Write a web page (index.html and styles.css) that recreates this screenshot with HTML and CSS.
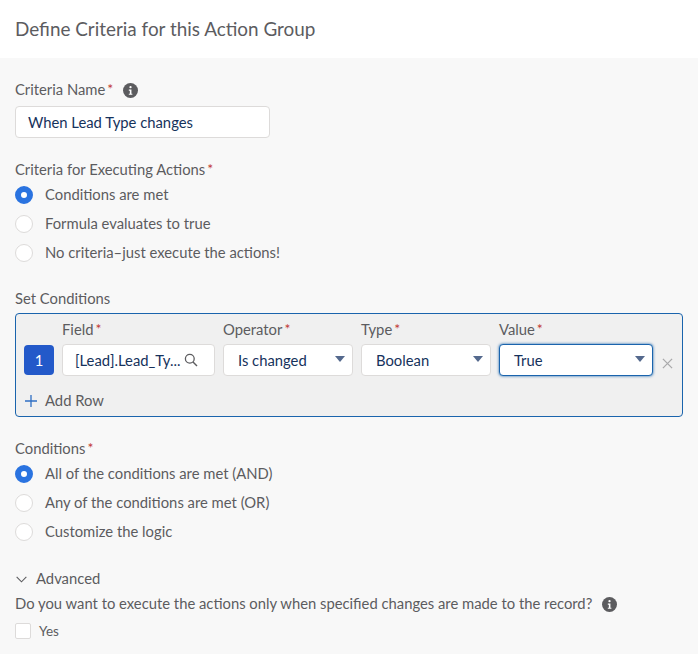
FILE: index.html
```html
<!DOCTYPE html>
<html>
<head>
    <title>Define Criteria for this Action Group</title>
    <link rel="stylesheet" href="styles.css">
</head>
<body>
    <div class="header">Define Criteria for this Action Group</div>

    <div class="content">
        <!-- Criteria name -->
        <div class="label name-label">Criteria Name<span class="req">*</span>
            <svg class="info" viewBox="0 0 16 16"><circle cx="8" cy="8" r="8" fill="#5c5c5f"/><circle cx="8" cy="4.4" r="1.2" fill="#fff"/><path d="M6.2 7h2.8v4.4h1v1.2H6.2v-1.2h1.1V8.2H6.2z" fill="#fff"/></svg>
        </div>
        <div class="input name-input">When Lead Type changes</div>

        <!-- Criteria for executing -->
        <div class="label section">Criteria for Executing Actions<span class="req">*</span></div>
        <div class="radios">
            <div class="radio-row"><span class="radio checked"></span>Conditions are met</div>
            <div class="radio-row"><span class="radio"></span>Formula evaluates to true</div>
            <div class="radio-row"><span class="radio"></span>No criteria–just execute the actions!</div>
        </div>

        <!-- Conditions table -->
        <div class="label set-label">Set Conditions</div>
        <div class="conditions">
            <div class="cond-row">
                <div class="num">1</div>
                <div class="col col-field">
                    <div class="label">Field<span class="req">*</span></div>
                    <div class="input field-input">[Lead].Lead_Ty...
                        <svg class="search" viewBox="0 0 14 14"><circle cx="5.8" cy="5.8" r="4.4" fill="none" stroke="#5c5c5f" stroke-width="1.3"/><path d="M9 9l4 4" stroke="#5c5c5f" stroke-width="1.4"/></svg>
                    </div>
                </div>
                <div class="col col-op">
                    <div class="label">Operator<span class="req">*</span></div>
                    <div class="input">Is changed<span class="caret"></span></div>
                </div>
                <div class="col col-type">
                    <div class="label">Type<span class="req">*</span></div>
                    <div class="input">Boolean<span class="caret"></span></div>
                </div>
                <div class="col col-value">
                    <div class="label">Value<span class="req">*</span></div>
                    <div class="input focused">True<span class="caret"></span></div>
                </div>
                <svg class="remove" viewBox="0 0 12 12"><path d="M1 1l10 10M11 1L1 11" stroke="#a9a9ab" stroke-width="1.4"/></svg>
            </div>
            <div class="add-row">
                <svg class="plus" viewBox="0 0 12 12"><path d="M6 0v12M0 6h12" stroke="#2f6fc4" stroke-width="1.3"/></svg>
                Add Row
            </div>
        </div>

        <!-- Conditions logic -->
        <div class="label logic-label">Conditions<span class="req">*</span></div>
        <div class="radios">
            <div class="radio-row"><span class="radio checked"></span>All of the conditions are met (AND)</div>
            <div class="radio-row"><span class="radio"></span>Any of the conditions are met (OR)</div>
            <div class="radio-row"><span class="radio"></span>Customize the logic</div>
        </div>

        <!-- Advanced -->
        <div class="label advanced">
            <svg class="chevron" viewBox="0 0 12 7"><path d="M.7.7L6 6l5.3-5.3" fill="none" stroke="#5c5c5f" stroke-width="1.2"/></svg>
            Advanced
        </div>
        <div class="label question">Do you want to execute the actions only when specified changes are made to the record?
            <svg class="info" viewBox="0 0 16 16"><circle cx="8" cy="8" r="8" fill="#5c5c5f"/><circle cx="8" cy="4.4" r="1.2" fill="#fff"/><path d="M6.2 7h2.8v4.4h1v1.2H6.2v-1.2h1.1V8.2H6.2z" fill="#fff"/></svg>
        </div>
        <div class="check-row"><span class="checkbox"></span>Yes</div>
    </div>
</body>
</html>
```

FILE: styles.css
```css
body {
    font-family: 'Lato', sans-serif;
    font-size: 14.8px;
    margin: 0;
    background: #f8f8f8;
    color: #5c5c5f;
}
.header {
    height: 58px;
    box-sizing: border-box;
    padding: 16px 15px 0;
    background: white;
    font-size: 18.9px;
    line-height: 26px;
}
.content {
    padding: 22px 15px 0;
}
.label {
    height: 18px;
    line-height: 18px;
}
.req {
    position: relative;
    top: -1px;
    margin-left: 2px;
    color: #c23934;
    font-size: 14px;
    line-height: 0;
}
.info {
    width: 15px;
    height: 15px;
    margin: -3px 0 -3px 6px;
    vertical-align: 0;
}
.input {
    position: relative;
    height: 32px;
    box-sizing: border-box;
    padding: 0 14px;
    background: white;
    border: 1px solid #dddbda;
    border-radius: 4px;
    color: #16325c;
    line-height: 30px;
    white-space: nowrap;
}
.name-label {
    margin-bottom: 8px;
}
.name-input, .field-input {
    padding: 0 12px;
}
.name-input {
    width: 255px;
}
.section {
    margin-top: 22px;
    margin-bottom: 7px;
}
.radios {
    display: flex;
    flex-direction: column;
    gap: 11px;
}
.radio-row {
    display: flex;
    align-items: center;
    gap: 12px;
    height: 18px;
}
.radio {
    width: 18px;
    height: 18px;
    box-sizing: border-box;
    margin-top: 2px;
    background: white;
    border: 1px solid #dddbda;
    border-radius: 50%;
}
.radio.checked {
    border: 6px solid #2a73e0;
}
.set-label {
    margin-top: 28px;
    margin-bottom: 6px;
}
.conditions {
    height: 104px;
    box-sizing: border-box;
    padding: 6px 8px 0;
    background: #f0f0f0;
    border: 1px solid #1a64ad;
    border-radius: 4px;
}
.cond-row {
    display: flex;
    align-items: flex-end;
    gap: 8px;
}
.col .label {
    margin-bottom: 6px;
}
.col-field {
    width: 153px;
}
.col-op, .col-type {
    width: 130px;
}
.col-value {
    width: 154px;
}
.num {
    width: 30px;
    height: 30px;
    margin-bottom: 1px;
    background: #2359c9;
    border-radius: 4px;
    color: white;
    text-align: center;
    line-height: 30px;
}
.search {
    position: absolute;
    top: 8px;
    right: 16px;
    width: 14px;
    height: 14px;
}
.caret {
    position: absolute;
    top: 11px;
    right: 7px;
    border-left: 5px solid transparent;
    border-right: 5px solid transparent;
    border-top: 6px solid #54698d;
}
.focused {
    border-color: #1a64ad;
    box-shadow: 0 0 3px #1a64ad;
}
.remove {
    width: 11px;
    height: 11px;
    margin: 0 0 7px 1px;
}
.add-row {
    display: flex;
    align-items: center;
    gap: 8px;
    margin-top: 15px;
    padding-left: 1px;
    line-height: 18px;
}
.plus {
    width: 12px;
    height: 12px;
    margin-top: 2px;
}
.logic-label {
    margin-top: 22px;
    margin-bottom: 7px;
}
.advanced {
    display: flex;
    align-items: center;
    gap: 9px;
    margin-top: 29px;
    padding-left: 1px;
}
.chevron {
    width: 11px;
    height: 7px;
    margin-top: 2px;
}
.question {
    margin-top: 7px;
}
.check-row {
    display: flex;
    align-items: center;
    gap: 8px;
    margin-top: 11px;
    font-size: 13.5px;
}
.checkbox {
    width: 16px;
    height: 16px;
    box-sizing: border-box;
    background: white;
    border: 1px solid #dddbda;
    border-radius: 2px;
}
```
